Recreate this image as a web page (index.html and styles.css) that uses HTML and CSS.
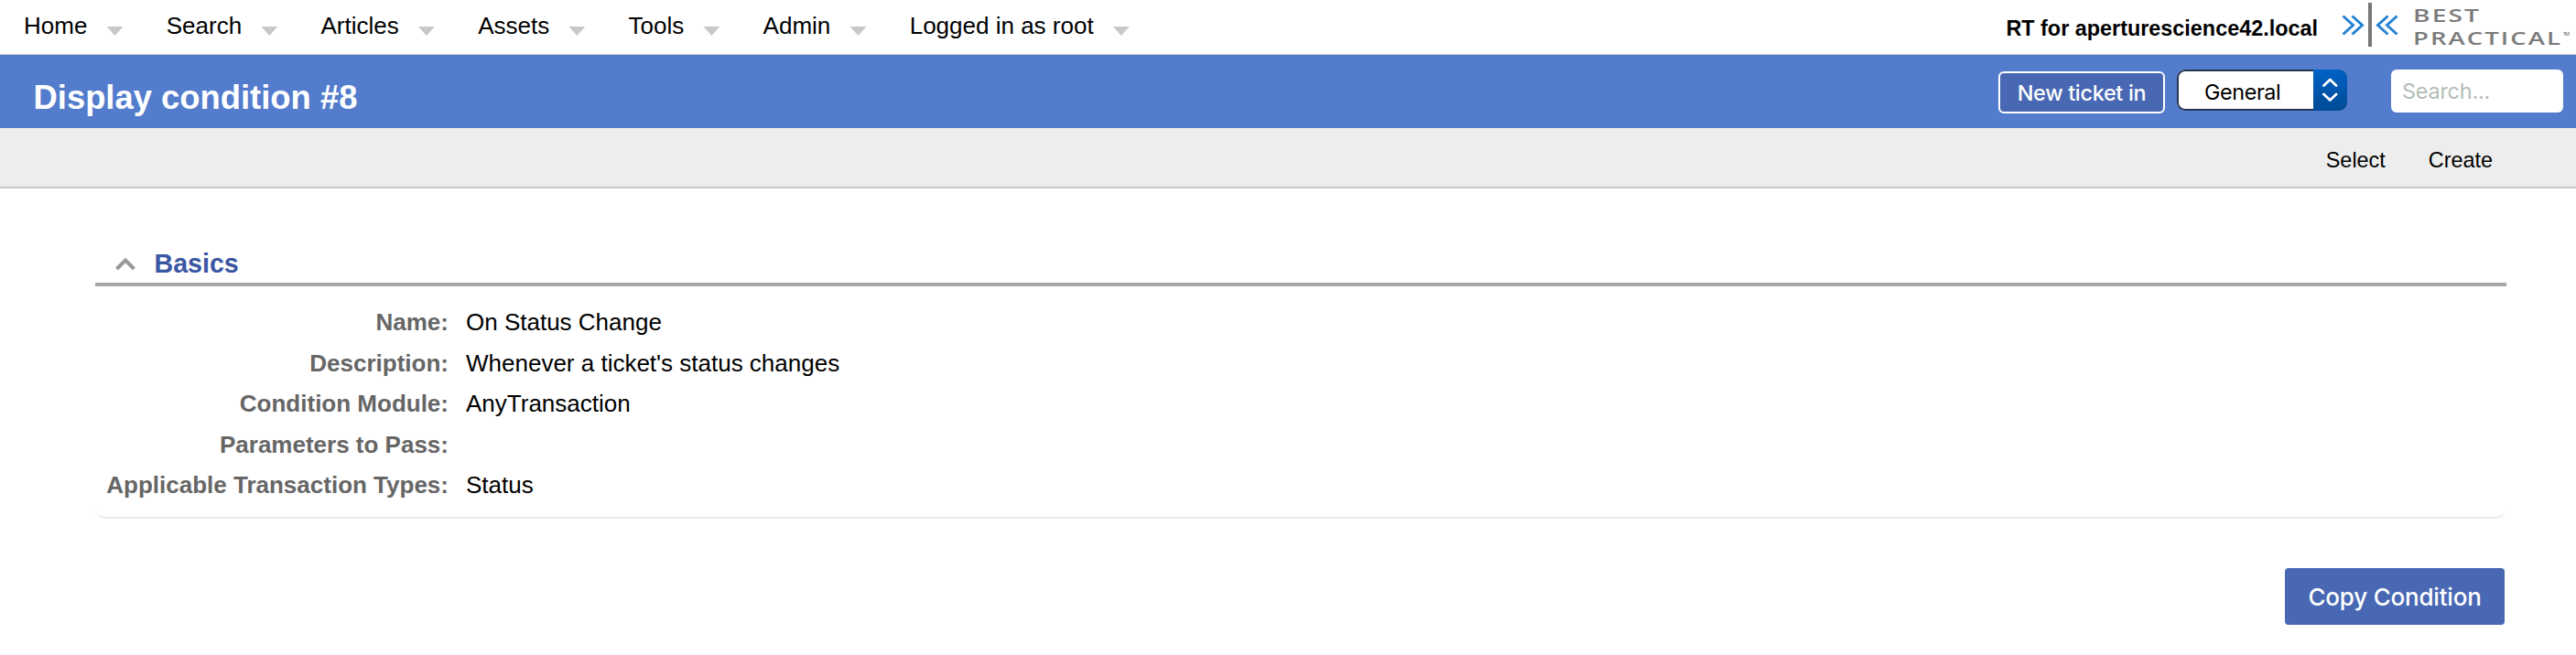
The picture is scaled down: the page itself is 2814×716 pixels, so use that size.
FILE: index.html
```html
<!DOCTYPE html>
<html lang="en">
<head>
<meta charset="utf-8">
<title>Display condition #8</title>
<link rel="stylesheet" href="styles.css">
</head>
<body>
<header class="topbar">
  <nav class="menu">
    <a class="menu-item">Home<i class="caret"></i></a>
    <a class="menu-item">Search<i class="caret"></i></a>
    <a class="menu-item">Articles<i class="caret"></i></a>
    <a class="menu-item">Assets<i class="caret"></i></a>
    <a class="menu-item">Tools<i class="caret"></i></a>
    <a class="menu-item">Admin<i class="caret"></i></a>
    <a class="menu-item">Logged in as root<i class="caret"></i></a>
  </nav>
  <div class="brand">
    <span class="site">RT for aperturescience42.local</span>
    <svg class="logo" width="256" height="56" viewBox="0 0 256 56">
      <g fill="none" stroke="#2582d2" stroke-width="3">
        <path d="M2.500 17.500 13.500 27.500 2.500 37.500M12.500 17.500 23.500 27.500 12.500 37.500"/>
        <path d="M51.500 17.500 40.500 27.500 51.500 37.500M61.500 17.500 50.500 27.500 61.500 37.500"/>
      </g>
      <rect x="30" y="3" width="4" height="48" fill="#777"/>
      <g class="logo-text">
        <text x="79" y="24" font-size="20" textLength="74" lengthAdjust="spacingAndGlyphs">BEST</text>
        <text x="79" y="49" font-size="20" textLength="163" lengthAdjust="spacingAndGlyphs">PRACTICAL</text>
        <text x="243" y="38.500" font-size="5.500" textLength="8.500">TM</text>
      </g>
    </svg>
  </div>
</header>
<div class="titlebar">
  <h1 class="title">Display condition #8</h1>
  <div class="actions">
    <button class="new-ticket">New ticket in</button>
    <div class="queue">
      <span class="queue-name">General</span>
      <span class="stepper">
        <svg width="37" height="45" viewBox="0 0 37 45"><path d="M11.500 17.500 18.300 11 25.100 17.500M11.500 27 18.300 33.500 25.100 27" fill="none" stroke="#fff" stroke-width="2.800" stroke-linecap="round" stroke-linejoin="round"/></svg>
      </span>
    </div>
    <div class="search">Search...</div>
  </div>
</div>
<nav class="subnav"><a class="select">Select</a><a>Create</a></nav>
<main class="content">
  <section class="panel">
    <h2 class="panel-head">
      <svg class="chevron" width="22" height="15" viewBox="0 0 22 15"><path d="M1.500 13 11 3.500 20.500 13" fill="none" stroke="#999" stroke-width="4"/></svg>
      <span>Basics</span>
    </h2>
    <dl class="fields">
      <dt>Name:</dt><dd>On Status Change</dd>
      <dt>Description:</dt><dd>Whenever a ticket's status changes</dd>
      <dt>Condition Module:</dt><dd>AnyTransaction</dd>
      <dt>Parameters to Pass:</dt><dd></dd>
      <dt>Applicable Transaction Types:</dt><dd>Status</dd>
    </dl>
  </section>
  <div class="buttons"><button class="copy">Copy Condition</button></div>
</main>
</body>
</html>
```
FILE: styles.css
```css
* { box-sizing: border-box; }
body {
  margin: 0;
  background: #fff;
  color: #000;
  font: 26px "Liberation Sans", Arial, sans-serif;
}
h1, h2, dl, dt, dd { margin: 0; }
.topbar {
  display: flex;
  justify-content: space-between;
  height: 60px;
  border-bottom: 1px solid #c6c6c6;
}
.menu {
  display: flex;
  gap: 47.2px;
  padding-left: 26px;
  line-height: 56px;
  white-space: nowrap;
}
.menu-item { display: flex; }
.caret {
  width: 18px;
  height: 10px;
  margin: 29px 0 0 21.2px;
  background: #c8c8c8;
  clip-path: polygon(0 0, 100% 0, 50% 100%);
}
.brand { display: flex; }
.site {
  font-size: 23.4px;
  font-weight: bold;
  line-height: 62px;
  margin-right: 25px;
}
.logo { margin-right: 1px; }
.logo-text {
  font-family: "Open Sans", sans-serif;
  font-weight: 600;
  letter-spacing: 1.5px;
  fill: #7b7b7b;
}
.titlebar {
  display: flex;
  justify-content: space-between;
  height: 80px;
  padding: 0 14px 0 36.500px;
  background: #537ccc;
}
.title {
  color: #fff;
  font-size: 36.4px;
  line-height: 93px;
}
.actions {
  display: flex;
  align-items: flex-start;
  padding-top: 16px;
  font: 23.4px Inter, sans-serif;
}
.new-ticket {
  width: 182px;
  height: 46px;
  margin: 2px 13px 0 0;
  padding: 1px 0 0;
  border: 2px solid #fff;
  border-radius: 6px;
  background: #4868b3;
  color: #fff;
  font: 500 23.4px/42px Inter, sans-serif;
  letter-spacing: -0.3px;
}
.queue {
  display: flex;
  width: 186px;
  height: 45px;
  margin-right: 48px;
  border-radius: 9px;
  overflow: hidden;
  background: #fff;
  box-shadow: inset 0 0 0 2px #253353;
}
.queue-name {
  width: 149px;
  padding-left: 30px;
  line-height: 49px;
  letter-spacing: -0.4px;
}
.stepper {
  width: 37px;
  height: 45px;
  background: linear-gradient(#0062c5, #004a94);
}
.search {
  width: 188px;
  height: 47px;
  padding-left: 12px;
  border-radius: 6px;
  background: #fff;
  color: #b3bdb5;
  line-height: 47px;
  letter-spacing: -0.2px;
}
.subnav {
  display: flex;
  justify-content: flex-end;
  gap: 47px;
  height: 66px;
  padding-right: 91px;
  border-bottom: 2px solid #c8c8c8;
  background: #ededed;
  font-size: 23.4px;
  line-height: 70px;
}
.content { padding: 54px 76px 0 104px; }
.panel {
  height: 307px;
  border-bottom: 2px solid #ececec;
  border-radius: 12px;
}
.panel-head {
  display: flex;
  height: 53px;
  padding-left: 22px;
  border-bottom: 4px solid #a8a8a8;
  color: #3a57a3;
  font-size: 28.6px;
  line-height: 56px;
}
.chevron { margin: 21px 20.500px 0 0; }
.fields {
  display: grid;
  grid-template-columns: 386px 1fr;
  grid-auto-rows: 44.500px;
  column-gap: 19px;
  padding-top: 17px;
  line-height: 44px;
}
.fields dt {
  color: #666;
  font-weight: bold;
  text-align: right;
  white-space: nowrap;
}
.buttons {
  display: flex;
  justify-content: flex-end;
  padding: 54px 2px 0 0;
}
.copy {
  width: 240px;
  height: 62px;
  padding: 1px 0 0;
  border: 0;
  border-radius: 4px;
  background: #4868b3;
  color: #fff;
  font: 500 26px/62px Inter, sans-serif;
  letter-spacing: -0.2px;
}
```
